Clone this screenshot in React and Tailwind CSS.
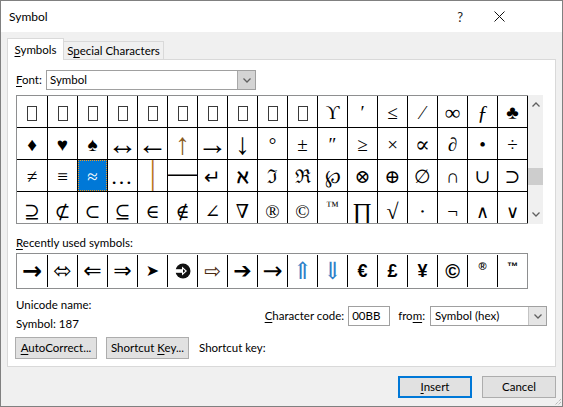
import React from 'react';

// Symbol font table (Symbol font, scrolled to 0xA0)
const rows = [
  [null, null, null, null, null, null, null, null, null, null, 'ϒ', '′', '≤', '⁄', '∞', 'ƒ', '♣'],
  ['♦', '♥', '♠', '↔', '←', '↑', '→', '↓', '°', '±', '″', '≥', '×', '∝', '∂', '•', '÷'],
  ['≠', '≡', '≈', '…', '│', '─', '↵', 'ℵ', 'ℑ', 'ℜ', '℘', '⊗', '⊕', '∅', '∩', '∪', '⊃'],
  ['⊇', '⊄', '⊂', '⊆', '∈', '∉', '∠', '∇', '®', '©', '™', '∏', '√', '⋅', '¬', '∧', '∨'],
];

const arrowCls = "font-['Liberation_Serif'] text-[30px] leading-none -mt-[2px]";
const charCls = {
  '↔': arrowCls,
  '←': arrowCls,
  '→': arrowCls,
  '↑': `${arrowCls} text-[#8a5a20]`,
  '↓': arrowCls,
  '↵': "font-['DejaVu_Sans'] text-[20px]",
  '│': "font-['Liberation_Mono'] text-[22px] text-[#b8731e] inline-block scale-y-[1.3]",
  '─': "font-['Liberation_Mono'] text-[22px] scale-x-[2.2] inline-block",
  '…': 'text-[22px] tracking-[2px]',
  'ƒ': 'italic text-[21px]',
  '™': 'text-[13px] -mt-[12px] inline-block',
  '∧': "font-['DejaVu_Sans'] font-light text-[18px]",
  '∨': "font-['DejaVu_Sans'] font-light text-[18px]",
  '∝': 'text-[22px]',
  '∏': 'text-[24px]',
  '√': 'text-[22px]',
  'ℵ': 'font-bold',
  '∞': 'text-[22px]',
};

const recent = [
  { c: '→', cls: "font-['DejaVu_Sans'] font-bold text-[24px]" },
  { c: '⬄', cls: "font-['DejaVu_Sans'] text-[22px]" },
  { c: '⇐', cls: "font-['DejaVu_Sans'] text-[22px]" },
  { c: '⇒', cls: "font-['DejaVu_Sans'] text-[22px]" },
  { c: '➤', cls: "font-['DejaVu_Sans'] text-[16px]" },
  { c: null },
  { c: '⇨', cls: "font-['DejaVu_Sans'] text-[20px] text-[#4a2a10]" },
  { c: '➔', cls: "font-['DejaVu_Sans'] text-[22px]" },
  { c: '→', cls: "font-['DejaVu_Sans'] text-[24px]" },
  { c: '⇑', cls: "font-['Liberation_Serif','DejaVu_Serif',serif] text-[24px] text-[#2f7fc8]" },
  { c: '⇓', cls: "font-['Liberation_Serif','DejaVu_Serif',serif] text-[24px] text-[#2f7fc8]" },
  { c: '€', cls: "font-['Liberation_Sans',sans-serif] font-bold text-[18px]" },
  { c: '£', cls: "font-['Liberation_Sans',sans-serif] font-bold text-[18px]" },
  { c: '¥', cls: "font-['Liberation_Sans',sans-serif] font-bold text-[18px]" },
  { c: '©', cls: "font-['Liberation_Sans',sans-serif] font-bold text-[20px]" },
  { c: '®', cls: "font-['Liberation_Sans',sans-serif] font-bold text-[11px] -mt-[10px]" },
  { c: '™', cls: "font-['Liberation_Sans',sans-serif] font-bold text-[11px] -mt-[10px]" },
];

const Chevron = ({ up }) => (
  <svg width="8" height="5" viewBox="0 0 8 5">
    <polyline
      points={up ? '0.5,4.5 4,1 7.5,4.5' : '0.5,0.5 4,4 7.5,0.5'}
      fill="none"
      stroke="#606060"
      strokeWidth="1.3"
    />
  </svg>
);

// Wingdings circled arrow
const CircleArrow = () => (
  <svg width="18" height="18" viewBox="0 0 18 18">
    <circle cx="9" cy="9" r="7.5" fill="#111" />
    <rect x="1" y="7.2" width="8" height="3.6" fill="#fff" />
    <path d="M8 4.5 L13 9 L8 13.5 Z" fill="#fff" />
    <path d="M9 7 L11.3 9 L9 11 Z" fill="#111" />
  </svg>
);

const Btn = ({ className = '', children }) => (
  <div className={`h-[22px] flex items-center justify-center bg-[#e1e1e1] border border-[#adadad] ${className}`}>
    {children}
  </div>
);

export default function App() {
  return (
    <div className="w-[563px] h-[407px] border border-[#808080] bg-[#f0f0f0] flex flex-col overflow-hidden text-[11.5px] text-black font-['Lato',sans-serif] leading-4">
      {/* Title bar */}
      <div className="h-[31px] shrink-0 bg-white flex items-center pl-2">
        <span className="text-[12px]">Symbol</span>
        <span className="ml-auto text-[13px] text-[#222]">?</span>
        <svg className="ml-[31px] mr-[57px]" width="11" height="11" viewBox="0 0 11 11">
          <path d="M0.5 0.5 L10.5 10.5 M10.5 0.5 L0.5 10.5" stroke="#111" strokeWidth="1" />
        </svg>
      </div>

      <div className="flex-1 px-[6px] flex flex-col">
        {/* Tabs */}
        <div className="mt-[6px] h-[22px] flex items-end relative z-10 -mb-px">
          <div className="h-[22px] w-[57px] bg-white border border-b-0 border-[#d9d9d9] flex items-center justify-center">
            <span><u className="underline-offset-2">S</u>ymbols</span>
          </div>
          <div className="h-[19px] w-[101px] -ml-px border border-b-0 border-[#d9d9d9] flex items-center justify-center">
            <span>S<u className="underline-offset-2">p</u>ecial Characters</span>
          </div>
        </div>

        {/* Panel */}
        <div className="h-[308px] shrink-0 bg-white border border-[#d9d9d9] px-2 flex flex-col">
          {/* Font row */}
          <div className="mt-[10px] h-[20px] flex items-center">
            <span className="w-[30px]"><u className="underline-offset-2">F</u>ont:</span>
            <div className="w-[210px] h-[20px] border border-[#a0a0a0] flex items-center">
              <span className="pl-[3px] flex-1">Symbol</span>
              <div className="w-[18px] h-full bg-[#d4d4d4] border-l border-[#a8a8a8] flex items-center justify-center">
                <Chevron />
              </div>
            </div>
          </div>

          {/* Character grid + scrollbar */}
          <div className="mt-[5px] flex w-[527px]">
            <div className="border border-[#8e8f90] border-r-0">
              <div className="grid grid-cols-[30px_repeat(16,29px)] gap-px bg-black border-r border-black font-['Liberation_Serif','DejaVu_Serif',serif] text-[19px]">
                {rows.map((row, ri) =>
                  row.map((ch, ci) => {
                    const sel = ri === 2 && ci === 2;
                    return (
                      <div
                        key={`${ri}-${ci}`}
                        className={`h-[31px] flex items-center justify-center overflow-hidden ${ri === 3 ? 'pt-[8px]' : 'pt-[2px]'} ${
                          sel
                            ? 'bg-[#0078d7] text-white outline outline-1 outline-dotted outline-[#f09a20] -outline-offset-1'
                            : 'bg-white'
                        }`}
                      >
                        {ch === null ? (
                          <span className="block w-[10px] h-[15px] border border-[#3a3a3a] mt-[2px]" />
                        ) : (
                          <span className={charCls[ch] || ''}>{ch}</span>
                        )}
                      </div>
                    );
                  })
                )}
              </div>
            </div>
            <div className="w-[15px] bg-[#f0f0f0] flex flex-col items-center">
              <div className="h-[15px] flex items-center justify-center mt-[2px]">
                <Chevron up />
              </div>
              <div className="mt-[56px] w-[15px] h-[17px] bg-[#cdcdcd]" />
              <div className="flex-1" />
              <div className="h-[15px] flex items-center justify-center mb-[2px]">
                <Chevron />
              </div>
            </div>
          </div>

          {/* Recently used */}
          <div className="mt-[11px] h-4"><u className="underline-offset-2">R</u>ecently used symbols:</div>
          <div className="mt-[2px] w-[512px] h-[36px] border border-[#8e8f90] py-px">
            <div className="grid grid-cols-[30px_repeat(16,29px)] gap-px bg-black h-full">
              {recent.map((r, i) => (
                <div key={i} className="bg-white flex items-center justify-center overflow-hidden">
                  {r.c === null ? <CircleArrow /> : <span className={r.cls}>{r.c}</span>}
                </div>
              ))}
            </div>
          </div>

          {/* Unicode info and char code */}
          <div className="mt-[8px] flex">
            <div className="flex flex-col">
              <span className="h-4">Unicode name:</span>
              <span className="h-4 mt-[3px]">Symbol: 187</span>
            </div>
            <div className="ml-auto mt-[9px] h-[20px] flex items-center">
              <span>
                <u className="underline-offset-2">C</u>haracter code:
              </span>
              <div className="ml-[4px] w-[42px] h-[20px] border border-[#a0a0a0] flex items-center pl-[3px]">00BB</div>
              <span className="ml-[8px]">
                fro<u className="underline-offset-2">m</u>:
              </span>
              <div className="ml-[5px] w-[117px] h-[20px] border border-[#a0a0a0] flex items-center">
                <span className="pl-[4px] flex-1">Symbol (hex)</span>
                <div className="w-[18px] h-full bg-[#e5e5e5] border-l border-[#c4c4c4] flex items-center justify-center">
                  <Chevron />
                </div>
              </div>
            </div>
          </div>

          {/* Buttons in panel */}
          <div className="mt-[5px] flex items-center">
            <Btn className="-ml-px w-[82px]">
              <span><u className="underline-offset-2">A</u>utoCorrect...</span>
            </Btn>
            <Btn className="ml-[9px] w-[83px]">
              <span>Shortcut <u className="underline-offset-2">K</u>ey...</span>
            </Btn>
            <span className="ml-[10px]">Shortcut key:</span>
          </div>
        </div>

        {/* Dialog buttons */}
        <div className="mt-[9px] flex justify-end">
          <div className="w-[74px] h-[22px] border-2 border-[#0078d7] bg-[#e1e1e1] flex items-center justify-center">
            <span><u className="underline-offset-2">I</u>nsert</span>
          </div>
          <Btn className="ml-[10px] w-[74px]">Cancel</Btn>
        </div>
      </div>

      {/* resize grip */}
      <div className="relative h-0">
        <svg className="absolute right-0 bottom-0" width="10" height="10" viewBox="0 0 10 10">
          <path d="M9 3 L3 9 M9 6 L6 9" stroke="#a0a0a0" strokeWidth="1" strokeDasharray="1 1" />
        </svg>
      </div>
    </div>
  );
}
